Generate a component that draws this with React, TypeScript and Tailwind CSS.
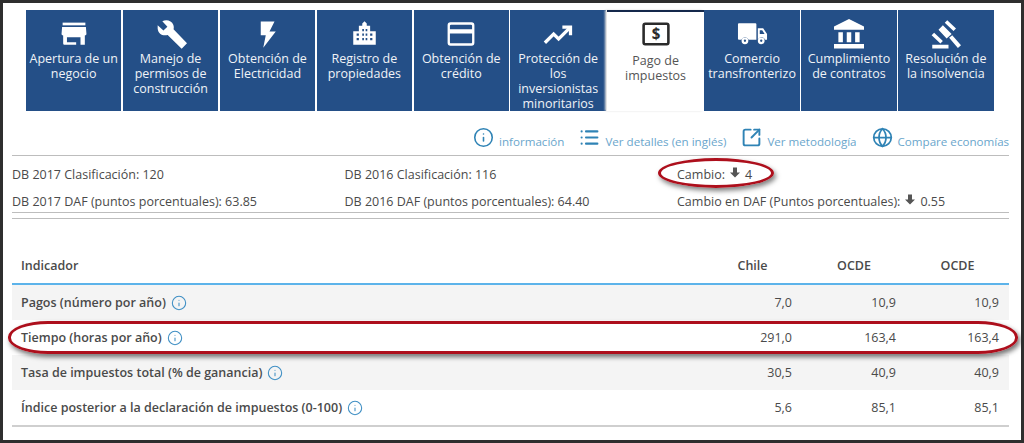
import React from "react";
import { Info, List, SquareArrowOutUpRight, Globe } from "lucide-react";

const S = ({ children, size = 30 }: { children: React.ReactNode; size?: number }) => (
  <svg viewBox="0 0 24 24" width={size} height={size} fill="white">{children}</svg>
);

const tabs: { label: string; icon: React.ReactNode; active?: boolean }[] = [
  { label: "Apertura de un negocio", icon: <S size={26}><path d="M1.500 1.500h21v2.500h-21z"/><path fillRule="evenodd" d="M1 5.500h22l.5 6.500c0 .8-.6 1.300-1.500 1.300V22h-4v-7H5.500v4.500h8.500V22H3.500c-1 0-1.500-.5-1.500-1.500v-7.200c-.9 0-1.500-.5-1.500-1.300z"/></S> },
  { label: "Manejo de permisos de construcción", icon: <svg viewBox="0 0 24 24" width="32" height="32" fill="white"><path d="M2 5.500 6.300 9.300 9.300 6.500 5.500 2.500C8.500.8 12.500 2 13.700 5c.5 1.200.5 2.500.2 3.500L24 19l-4 4-10.500-10.300c-3.500 1-7-.5-7.500-4.700z"/></svg> },
  { label: "Obtención de Electricidad", icon: <S><path d="M7 2h11l-4 8h5L9 23l2-10H7z"/></S> },
  { label: "Registro de propiedades", icon: <S size={27}><path fillRule="evenodd" d="M10 5V3l2-2 2 2v2h3v5h5v12H2V10h5V5zM5 12v2h2v-2zm0 4v2h2v-2zm5-8v2h1.500V8zm3 0v2h1.500V8zm-3 4v2h1.500v-2zm3 0v2h1.500v-2zm-3 4v2h1.500v-2zm3 0v2h1.500v-2zm4-4v2h2v-2zm0 4v2h2v-2z"/></S> },
  { label: "Obtención de crédito", icon: <S size={28}><path fillRule="evenodd" d="M3 2h18a2.500 2.500 0 0 1 2.500 2.500v15A2.500 2.500 0 0 1 21 22H3a2.500 2.500 0 0 1-2.500-2.500v-15A2.500 2.500 0 0 1 3 2zm-.5 3v3h19V5a1 1 0 0 0-1-1h-17a1 1 0 0 0-1 1zm0 6.500V19a1 1 0 0 0 1 1h17a1 1 0 0 0 1-1v-7.500z"/></S> },
  { label: "Protección de los inversionistas minoritarios", icon: <svg viewBox="0 0 24 24" width="30" height="30" fill="none" stroke="white" strokeWidth="2.600"><path d="M1.500 19 8.500 12l4 4L21 7.500"/><path d="M15.500 6.500H22V13" /></svg> },
  { label: "Pago de impuestos", active: true, icon: <svg viewBox="0 0 26 22" width="28" height="24"><rect x="1.500" y="1.500" width="23" height="19" rx="1.500" fill="white" stroke="#2b2b2b" strokeWidth="2.400"/><text x="13" y="16" textAnchor="middle" fontSize="14" fontWeight="700" fontFamily="'Open Sans', sans-serif" fill="#2b2b2b">$</text></svg> },
  { label: "Comercio transfronterizo", icon: <svg viewBox="0 0 32 24" width="31" height="24" fill="white"><path fillRule="evenodd" d="M2 1h17a1 1 0 0 1 1 1v16h-8a4 4 0 0 0-7.500 0H2a1 1 0 0 1-1-1V2a1 1 0 0 1 1-1zm19.500 5H27l4 6v6h-2a4 4 0 0 0-7.500 0zM23.500 8v4h5l-2.500-4z"/><path fillRule="evenodd" d="M8.200 15.500a3.500 3.500 0 1 1 0 7 3.500 3.500 0 0 1 0-7zm0 2.300a1.200 1.200 0 1 0 0 2.400 1.200 1.200 0 0 0 0-2.400zM25 15.500a3.500 3.500 0 1 1 0 7 3.500 3.500 0 0 1 0-7zm0 2.300a1.200 1.200 0 1 0 0 2.400 1.200 1.200 0 0 0 0-2.400z"/></svg> },
  { label: "Cumplimiento de contratos", icon: <S><path d="M12 0 24 6v2.500H0V6zM0 20h24v3.500H0zM3.500 10.500h3.600v8H3.500zM10.200 10.500h3.600v8h-3.600zM16.900 10.500h3.600v8h-3.600z"/></S> },
  { label: "Resolución de la insolvencia", icon: <S><path d="m13 1 7 6.500-2 2-7-6.500zM9.500 5l7 7-4 3.500-6.500-7zM14.500 15l2.500-2 7 8-2.500 2.200zM2.500 11l7 6.500-2 2-7-6.500zM1 20.500h13V23.500H1z" /></S> },
];

const rows = [
  { name: "Pagos (número por año)", vals: ["7,0", "10,9", "10,9"], gray: true },
  { name: "Tiempo (horas por año)", vals: ["291,0", "163,4", "163,4"], gray: false },
  { name: "Tasa de impuestos total (% de ganancia)", vals: ["30,5", "40,9", "40,9"], gray: true },
  { name: "Índice posterior a la declaración de impuestos (0-100)", vals: ["5,6", "85,1", "85,1"], gray: false },
];

const links = [
  { label: "información", icon: <Info size={21} strokeWidth={1.800} /> },
  { label: "Ver detalles (en inglés)", icon: <List size={21} strokeWidth={2.400} /> },
  { label: "Ver metodología", icon: <SquareArrowOutUpRight size={21} strokeWidth={2.200} /> },
  { label: "Compare economías", icon: <Globe size={21} strokeWidth={2} /> },
];

const Down = () => (
  <svg viewBox="0 0 12 12" width="12" height="13" className="relative top-[-3px] mx-[4px] inline-block" fill="#555"><path d="M4 1h4v5h3L6 11 1 6h3z" /></svg>
);

export default function App() {
  return (
    <div className="relative h-[443px] w-[1024px] overflow-hidden border-[3px] border-[#2e2e2e] bg-white text-[12.500px] leading-[15px] text-[#4a4a4a] font-['Open_Sans',sans-serif]">
      <div className="ml-[23px] mt-[6.500px] flex h-[101.500px] w-[968px]">
        {tabs.map((t) =>
          t.active ? (
            <div key={t.label} className="mr-[0.500px] flex w-[96.500px] shrink-0 flex-col items-center border-t-2 border-[#14284b] bg-white pt-[6px] text-center text-[#555] shadow-[-2px_0_2px_#e0e0e0]">
              <div className="flex h-[33px] items-center">{t.icon}</div>
              <div className="mt-[2px] px-[10px]">{t.label}</div>
            </div>
          ) : (
            <div key={t.label} className="mr-[1.500px] flex w-[95.400px] shrink-0 flex-col items-center bg-[#244f87] pt-[8px] text-center text-[#f0f3f7]">
              <div className="flex h-[32px] items-center justify-center">{t.icon}</div>
              <div className="mt-[1px] px-[2px]">{t.label}</div>
            </div>
          )
        )}
      </div>

      <div className="mt-[16px] ml-[470px] flex h-[27px] items-center gap-[15px] text-[11.600px] text-[#6aa6cc]">
        {links.map((l) => (
          <div key={l.label} className="flex items-center gap-[5px] whitespace-nowrap">
            <span className="relative top-[-3px] text-[#2f83b5]">{l.icon}</span>
            <span className="relative top-[1px]">{l.label}</span>
          </div>
        ))}
      </div>

      <div className="ml-[9px] mt-[1px] w-[997px]">
        <div className="flex flex-col gap-[12px] border-y border-[#bdbdbd] pb-[3px] pt-[11px]">
          <div className="grid h-[15px] grid-cols-[332.500px_332.500px_1fr] items-center">
            <div>DB 2017 Clasificación: 120</div>
            <div>DB 2016 Clasificación: 116</div>
            <div>Cambio:<Down />4</div>
          </div>
          <div className="grid h-[15px] grid-cols-[332.500px_332.500px_1fr] items-center">
            <div>DB 2017 DAF (puntos porcentuales): 63.85</div>
            <div>DB 2016 DAF (puntos porcentuales): 64.40</div>
            <div>Cambio en DAF (Puntos porcentuales):<Down />0.55</div>
          </div>
        </div>
        <div className="mt-[5px] border-t border-[#bdbdbd]" />

        <div className="mt-[32px] flex h-[34px] items-center border-b-[2px] border-[#5cb3ea] pb-[4px] pl-[9px] font-semibold">
          <div className="flex-1">Indicador</div>
          <div className="w-[93px] pr-[6px] text-center">Chile</div>
          <div className="w-[104px] text-center">OCDE</div>
          <div className="w-[103px] text-center">OCDE</div>
        </div>
        {rows.map((r) => (
          <div key={r.name} className={`flex h-[35px] items-center pl-[9px] ${r.gray ? "bg-[#f4f4f4]" : "bg-white"}`}>
            <div className="flex flex-1 items-center gap-[5px] font-semibold">
              {r.name}
              <Info size={16} strokeWidth={1.600} className="text-[#3f8fc4]" />
            </div>
            <div className="w-[93px] pr-[10px] text-right">{r.vals[0]}</div>
            <div className="w-[104px] pr-[10px] text-right">{r.vals[1]}</div>
            <div className="w-[103px] pr-[10px] text-right">{r.vals[2]}</div>
          </div>
        ))}
        <div className="border-t-2 border-[#cfcfcf]" />
      </div>

      <div className="absolute left-[655px] top-[155px] h-[30px] w-[116px] rounded-[50%] border-[3.500px] border-[#ad0f1c] shadow-[2px_3px_5px_rgba(0,0,0,0.5)]" />
      <div className="absolute left-[5px] top-[318px] h-[32.500px] w-[1010px] rounded-[40px/16px] border-[3.500px] border-[#ad0f1c] shadow-[2px_3px_5px_rgba(0,0,0,0.55)]" />
    </div>
  );
}
